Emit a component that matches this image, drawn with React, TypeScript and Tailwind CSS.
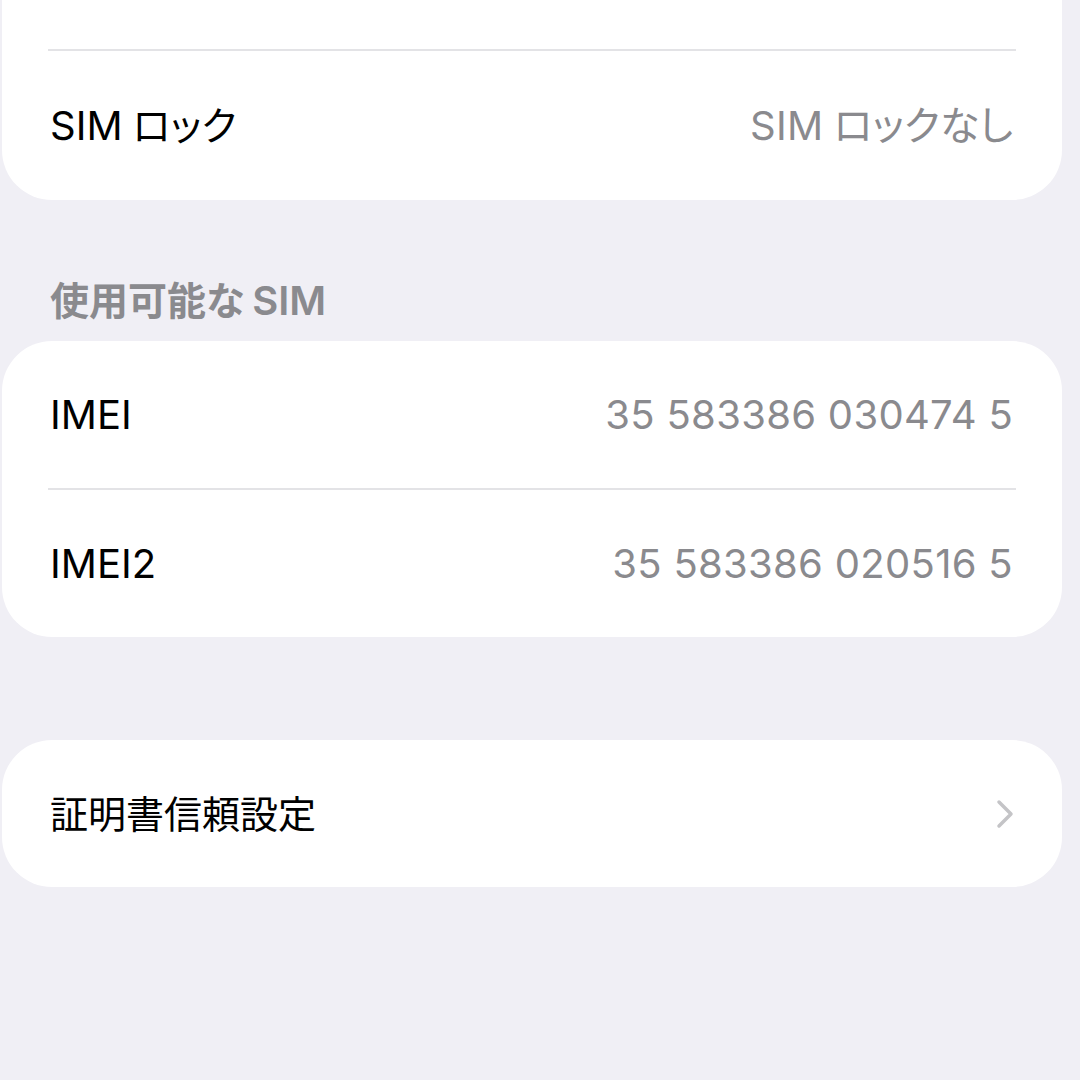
import React from "react";

const font = { fontFamily: 'Inter, "Noto Sans CJK JP", sans-serif' };

function Row({ label, value, chevron, h = "h-[147px]" }: { label?: React.ReactNode; value?: React.ReactNode; chevron?: boolean; h?: string }) {
  return (
    <div className={`flex items-center justify-between pl-[48px] pr-[49px] ${h}`}>
      <span className="text-[40px] leading-[48px] text-black">{label}</span>
      {value && <span className="text-[40px] leading-[48px] tracking-[0.3px] text-[#8a8a8e]">{value}</span>}
      {chevron && (
        <svg width="20" height="32" viewBox="0 0 20 32" fill="none" className="-mr-[2px]">
          <path d="M4 4 L16 16 L4 28" stroke="#c4c4c7" strokeWidth="3.5" strokeLinecap="round" strokeLinejoin="round" />
        </svg>
      )}
    </div>
  );
}

function Separator() {
  return <div className="mx-[46px] h-[2px] bg-[#e3e3e6]" />;
}

// Japanese runs: proportional (palt), as on iOS
function Jp({ children, className = "text-[39px]" }: { children: React.ReactNode; className?: string }) {
  return <span className={`[font-feature-settings:'palt'] ${className}`}>{children}</span>;
}

function App(): React.JSX.Element {
  return (
    <div className="w-[1080px] h-[1080px] overflow-hidden bg-[#f0eff5]" style={font}>
      <div className="ml-[2px] w-[1060px] -mt-[99px] bg-white rounded-[50px]">
        <Row h="h-[148px]" />
        <Separator />
        <Row
          label={<>SIM<Jp className="text-[39px] ml-[10px]">ロック</Jp></>}
          value={<>SIM<Jp className="text-[40px] ml-[10px] tracking-normal">ロックなし</Jp></>}
          h="h-[149px]"
        />
      </div>

      <div className="h-[141px] flex items-end pl-[50px] pb-[20px]">
        <span className="text-[40px] leading-[40px] font-semibold text-[#8a8a8e]">
          <Jp className="text-[39px] mr-[8px]">使用可能な</Jp>SIM
        </span>
      </div>

      <div className="ml-[2px] w-[1060px] bg-white rounded-[50px]">
        <Row label="IMEI" value="35 583386 030474 5" />
        <Separator />
        <Row label="IMEI2" value="35 583386 020516 5" />
      </div>

      <div className="ml-[2px] mt-[103px] w-[1060px] bg-white rounded-[50px]">
        <Row label={<Jp className="text-[38px]">証明書信頼設定</Jp>} chevron />
      </div>
    </div>
  );
}

export default App;
